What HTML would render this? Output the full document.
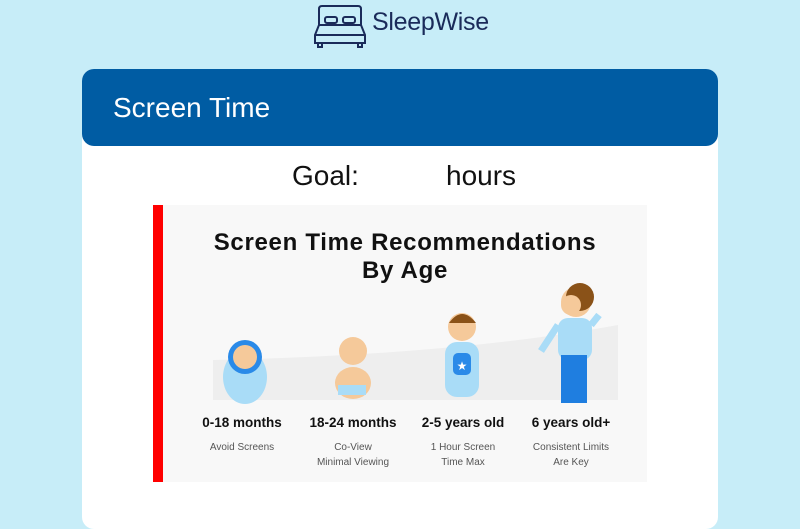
<!DOCTYPE html>
<html><head><style>
body{margin:0;width:800px;height:509px;background:#c7edf8;font-family:"Liberation Sans",sans-serif;position:relative;overflow:hidden}
.logo{position:absolute;left:313px;top:3px}
.brand{position:absolute;left:372px;top:8px;font-size:25px;color:#1a2b5a;letter-spacing:-0.3px}
.card{position:absolute;left:82px;top:69px;width:636px;height:460px;background:#fff;border-radius:12px}
.hdr{position:absolute;left:82px;top:69px;width:636px;height:77px;background:#005ca3;border-radius:12px}
.hdr span{position:absolute;left:31px;top:23px;color:#fff;font-size:28px}
.goal{position:absolute;top:160px;font-size:28px;color:#111}
.img{position:absolute;left:153px;top:205px;width:494px;height:277px;background:#f8f8f8}
.red{position:absolute;left:0;top:0;width:10px;height:277px;background:#f00}
.t{position:absolute;left:10px;width:484px;text-align:center;font-weight:bold;font-size:24px;letter-spacing:0.7px;color:#111}
.lab{position:absolute;top:210px;font-weight:bold;font-size:13.5px;color:#111;text-align:center;width:110px}
.sub{position:absolute;top:235px;font-size:10px;color:#555;text-align:center;width:110px;line-height:15px}
</style></head><body>
<svg class="logo" width="56" height="46" viewBox="0 0 56 46" fill="none" stroke="#1a2b5a" stroke-width="2">
<path d="M6 22V6q0-3 3-3h36q3 0 3 3v16"/><rect x="12" y="14" width="12" height="6" rx="2"/><rect x="30" y="14" width="12" height="6" rx="2"/>
<path d="M6 22L2 32v8h50v-8l-4-10z"/><path d="M2 32h50"/><path d="M5 40v4h4v-4M45 40v4h4v-4"/></svg>
<div class="brand">SleepWise</div>
<div class="card"></div>
<div class="hdr"><span>Screen Time</span></div>
<div class="goal" style="left:292px">Goal:</div>
<div class="goal" style="left:446px">hours</div>
<div class="img"><div class="red"></div>
<div class="t" style="top:24px">Screen Time Recommendations</div>
<div class="t" style="top:52px">By Age</div>
<svg style="position:absolute;left:0;top:0" width="494" height="277">
<path d="M60 155 Q300 150 465 120 V195 H60Z" fill="#eeeeee"/>
<ellipse cx="92" cy="172" rx="22" ry="27" fill="#a9dcf7"/><circle cx="92" cy="152" r="17" fill="#2a8ae8"/><circle cx="92" cy="152" r="12" fill="#f5c99a"/>
<circle cx="200" cy="146" r="14" fill="#f5c99a"/><ellipse cx="200" cy="178" rx="18" ry="16" fill="#f5c99a"/><rect x="185" y="180" width="28" height="10" fill="#a9dcf7"/>
<circle cx="309" cy="122" r="14" fill="#f5c99a"/><path d="M296 118 q13 -18 27 0" fill="#8a5218"/><rect x="292" y="137" width="34" height="55" rx="12" fill="#a9dcf7"/><rect x="300" y="148" width="18" height="22" rx="5" fill="#2a8ae8"/><text x="309" y="165" font-size="12" fill="#fff" text-anchor="middle">★</text>
<circle cx="423" cy="97" r="15" fill="#f5c99a"/><circle cx="427" cy="92" r="14" fill="#8a5218"/><circle cx="418" cy="100" r="10" fill="#f5c99a"/><rect x="405" y="113" width="34" height="42" rx="10" fill="#a9dcf7"/><rect x="408" y="150" width="26" height="48" fill="#1f7ee0"/><path d="M405 120 L388 146 M438 120 L446 110" stroke="#a9dcf7" stroke-width="7"/>
</svg>
<div class="lab" style="left:34px">0-18 months</div><div class="sub" style="left:34px">Avoid Screens</div>
<div class="lab" style="left:145px">18-24 months</div><div class="sub" style="left:145px">Co-View<br>Minimal Viewing</div>
<div class="lab" style="left:255px">2-5 years old</div><div class="sub" style="left:255px">1 Hour Screen<br>Time Max</div>
<div class="lab" style="left:363px">6 years old+</div><div class="sub" style="left:363px">Consistent Limits<br>Are Key</div>
</div>
</body></html>
